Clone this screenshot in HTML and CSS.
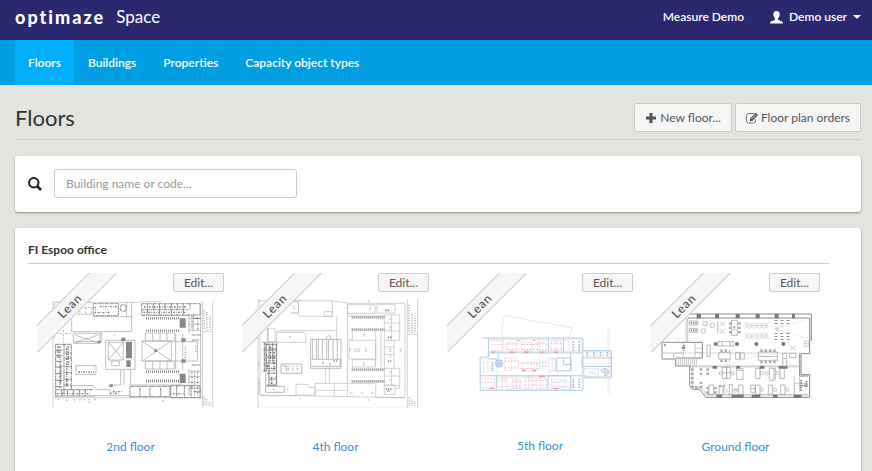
FILE: index.html
```html
<!DOCTYPE html>
<html lang="en">
<head>
<meta charset="utf-8">
<meta name="viewport" content="width=device-width, initial-scale=1">
<title>Floors - Optimaze Space</title>
<link rel="stylesheet" href="styles.css">
</head>
<body>
<header class="topbar">
  <a class="brand" href="#"><span class="brand-logo">optimaze</span><span class="brand-product">Space</span></a>
  <div class="account">
    <a href="#">Measure Demo</a>
    <button class="user-menu" type="button">
      <svg class="icon-user" viewBox="0 0 13 13" aria-hidden="true"><path d="M6.500 0C8.700 0 9.700 1.300 9.700 3.300C9.700 5 9 6.500 8 7.500V8.800L11.500 10.200C12.500 10.600 13 11.200 13 12.500H0C0 11.200.5 10.600 1.500 10.200L5 8.800V7.500C4 6.500 3.300 5 3.300 3.300C3.300 1.300 4.300 0 6.500 0Z"/></svg>
      <span>Demo user</span>
      <span class="caret"></span>
    </button>
  </div>
</header>
<nav class="tabs">
  <a class="tab tab-active" href="#">Floors</a>
  <a class="tab" href="#">Buildings</a>
  <a class="tab" href="#">Properties</a>
  <a class="tab" href="#">Capacity object types</a>
</nav>
<main class="page">
  <div class="page-head">
    <h1>Floors</h1>
    <div class="actions">
      <button class="btn" type="button"><svg class="icon" viewBox="0 0 12 12" aria-hidden="true"><path fill="#555" d="M4.500 1h3v3.500H11v3H7.500V11h-3V7.500H1v-3h3.500z"/></svg>New floor...</button>
      <button class="btn" type="button"><svg class="icon" viewBox="0 0 12 12" aria-hidden="true"><path fill="none" stroke="#777" d="M8 1.500H2.500Q.5 1.500.5 3.500V9Q.5 11 2.500 11H7.500Q9.500 11 9.500 9V7.500"/><path fill="#555" d="M4 9V6.500L9.800.8L12 3L6.300 9z"/><path stroke="#f6f6f6" stroke-width=".8" d="M5.500 7L9.500 3"/></svg>Floor plan orders</button>
    </div>
  </div>
  <form class="card search">
    <label for="search" aria-label="Search"><svg class="icon-search" viewBox="0 0 14 14" aria-hidden="true"><circle cx="5.800" cy="5.800" r="4.700" fill="none" stroke="#222" stroke-width="2"/><path d="M9 9l4 4" stroke="#222" stroke-width="2.600"/></svg></label>
    <input id="search" type="text" placeholder="Building name or code...">
  </form>
  <section class="card building">
    <h2>FI Espoo office</h2>
    <div class="floors">
      <article class="floor">
        <svg class="plan" viewBox="21 24 561 405" aria-hidden="true">
          <g fill="none" stroke="#bbb" stroke-width="2">
            <path d="M69 107V427M517 107V427M548 107V427M517 200H548M69 112H335M69 398H517M75 112H190M335 110H395"/>
          </g>
          <g fill="none" stroke="#999" stroke-width="1.800">
            <path d="M125 155V200H214V230H130M192 155H305V200H214M305 155V112M290 112V155M130 205H210V235H130zM135 210L205 233M205 210L135 233M227 226H315V313H227zM235 232H280V285H235zM235 232L280 285M280 232L235 285M245 288H268V302H245zM336 228H424V288H336zM336 228L424 288M424 228L336 288M346 204H433V228H346zM368 204V228M390 204V228M411 204V228M346 288H433V312H346zM368 288V312M390 288V312M411 288V312M437 205V312M433 230H502V288H433M458 205V312M272 313V360H245M282 313V360M302 313V360H460M125 362H190L200 374H240V392M190 392H300M138 302H198V328H138z"/>
            <path d="M512 115V400M477 145V205M477 312V392M512 160H477M512 178H477M512 196H477M512 318H477M512 335H477M512 352H477M512 370H477M335 152H475M490 145V200M494 318V395"/>
          </g>
          <g fill="none" stroke="#777" stroke-width="2.600">
            <path d="M190 116H265V152H190zM272 120H288V138H272zM335 116H510V150H335zM335 134H475M352 116V150M370 116V134M388 116V150M405 116V134M424 116V150M442 116V134M460 116V150M480 116V134" stroke-dasharray="9 2 4 2"/>
            <path d="M77 238V396M102 236V390M124 240V372M77 238H124M78 256H98M78 272H98M78 289H98M78 306H98M78 326H98M78 346H98M78 365H98M105 264H123M105 280H123M105 305H123M105 323H123M105 343H123M105 360H123M77 374H190M77 393H195M95 374V393M112 374V393M130 374V393M148 374V393M166 374V393M300 364H420V395H300zM330 368V394M360 368V394M392 368V394M422 362H510V398H422zM440 362V398M463 362V398M483 362V398M490 160H512M485 210H512M485 225H508M485 300H510M490 380H512" stroke-dasharray="12 2 5 1"/>
            <path d="M130 128H185V148H130M150 128V148M168 128V148M73 115V220M100 195V232M76 205H98M105 206H122" stroke="#aaa" stroke-dasharray="7 4"/>
          </g>
          <g fill="none" stroke="#888" stroke-width="7" stroke-dasharray="3 3"><path d="M348 160H450M348 197H450M348 320H448M348 348H448"/></g>
          <g fill="none" stroke="#777" stroke-width="4" stroke-dasharray="5 4 2 4"><path d="M84 244V280M92 300V360M115 244V300M111 345V365M80 386H180M145 321H193M240 385H260M249 380H278M428 386H460M196 125V148M203 143H240M210 125H262M342 126H470M486 152V194M503 158V196M486 320V370M503 320V392M340 142H470M90 244V372M110 250V360"/></g>
          <g fill="#888"><path d="M288 230H306V280H288zM289 286H302V306H289zM274 218H286V229H274zM449 160H467V188H449zM449 326H467V354H449zM454 220H467V230H454zM454 283H467V293H454zM238 358H248V366H238zM203 227H212V234H203zM373 253H381V261H373z"/></g>
          <g fill="none" stroke="#aaa" stroke-width="5" stroke-dasharray="2 3"><path d="M522 135V195M530 142V197M540 152V197M522 394V423M529 402V423M539 410V423M85 402V407M110 400V409M133 402V409M150 402V411M163 402V412M178 402V414M191 403H199M395 408H403M251 210H257M466 242V280M498 244V264"/></g>
        </svg>
        <div class="ribbon"><span>Lean</span></div>
        <button class="btn btn-small" type="button">Edit...</button>
        <a class="floor-name" href="#">2nd floor</a>
      </article>
      <article class="floor">
        <svg class="plan" viewBox="21 24 561 405" aria-hidden="true">
          <g fill="none" stroke="#bbb" stroke-width="2">
            <path d="M69 102V430M65 430H548V102M517 102V430M517 208H548M69 107H290L337 114M75 107V392H183M75 390L510 398V115H337M292 108V154H195L188 145M305 154V226M125 197H305M337 114V396M337 153H450M240 355H422M240 376H337M240 355V392M272 310V355M283 310V355M298 355V394M183 358H218L224 368H240V390H183zM422 360V398M510 398H422M268 140H292V154H268z"/>
            <path d="M97 190H120V230H97zM125 202H205L213 208V232H125zM352 196V226H422V282H352V310M345 222H352M352 226H342V282H352M352 284H420V306H352M422 196V306M438 196V306M358 252H374V260H358zM338 119H420V146H338zM426 118H480V144H426zM448 150H494V226H448zM448 174H494M448 198H494M470 150V226M448 310H494V362H448zM448 333H494M470 310V362M477 226V310M448 226V310M448 246H477M448 268H477M448 360H480V388H448zM494 362V370H480"/>
          </g>
          <g fill="none" stroke="#999" stroke-width="2"><path d="M227 223H318V310H227zM233 223V282M244 223V282M250 223V282M262 223V282M275 223V282M281 223V282M294 223V282M307 223V282M229 283H316V304H229M274 223C274 209 288 209 288 223M167 110H190V144H167M138 297H200V325H138zM142 303H154V320M92 364H148V382H92zM80 232H125V362H92V232M83 255H125M83 318H120M99 190V230"/></g>
          <g fill="none" stroke="#777" stroke-width="3" stroke-dasharray="9 2 4 1"><path d="M94 235V318M102 235V360M113 235V290M124 236V362M93 238H124M102 252H124M94 276H124M94 294H124M96 310H124M96 325H124M102 342H124M97 360H124M88 232V320"/></g>
          <g fill="none" stroke="#888" stroke-width="8" stroke-dasharray="3 3"><path d="M350 157H448M350 194H448M350 314H448M350 349H448"/></g>
          <g fill="none" stroke="#777" stroke-width="5" stroke-dasharray="6 4 3 3"><path d="M106 244V292M117 260V315M110 335V358M98 300V312"/></g>
          <g fill="none" stroke="#888" stroke-width="5" stroke-dasharray="4 3"><path d="M296 288H306M451 136H463M458 217H470M458 288H470M452 372H474M457 378H466M262 293H268M283 297H289"/></g>
          <g fill="none" stroke="#aaa" stroke-width="5" stroke-dasharray="2 3"><path d="M522 120V203M531 146V203M540 155V203M523 395V424M531 404V424M539 410V424M71 290V310M71 340V388M177 124V134M387 207V217M393 248V264M386 292V303M466 158V168M466 182V194M466 248V260M466 270V280M466 318V328M466 342V352M497 250V265M405 124V136M345 250V260M166 213V223M160 304V316M173 304V316M187 304V316M116 373V378M156 373H162M345 384H352M378 384H385M408 384H415M193 105H199M399 109H405M194 400H199M399 405H404"/></g>
        </svg>
        <div class="ribbon"><span>Lean</span></div>
        <button class="btn btn-small" type="button">Edit...</button>
        <a class="floor-name" href="#">4th floor</a>
      </article>
      <article class="floor">
        <svg class="plan" viewBox="21 24 561 405" aria-hidden="true">
          <g fill="none" stroke="#e1e4ef" stroke-width="2.500"><path d="M184 204L194 152L398 189L391 218M184 204L190 218M510 188V390" /><path d="M506 190V275M506 345V388" stroke-width="1.500"/></g>
          <g fill="none" stroke="#b3cce2" stroke-width="3">
            <path d="M128 220H431V378H121V278H146V220M431 258H517V340H431M121 334H170M170 334V376M146 265H431M175 265V283H148M326 334H394V376M326 334V376M327 222V264M372 222V264M352 280H395V319H352zM372 280V300H395M394 264V319M431 280H521M428 280V306H515M170 334H430"/>
          </g>
          <g fill="none" stroke="#c5d5e6" stroke-width="1.500"><path d="M147 225H428V261H147M125 283H172V373H125M190 222V264M245 222V264M300 222V264M435 261H514V336H435M435 312H478V336H435zM435 312L478 336M478 312L435 336M452 260V280M472 260V280M492 260V280M300 280V320M310 280V320M319 280V320M300 294H322M300 306H322M327 280H348V320H327M117 278V290M394 340V374M355 320V334M180 338H325M180 374H392"/></g>
          <g fill="none" stroke="#9db9d6" stroke-width="5" stroke-dasharray="5 3"><path d="M402 230V262M420 230V262M402 342V372M420 342V372M158 293V320M444 262V276M464 262V276M484 262V276M504 262V276"/></g>
          <g fill="none" stroke="#a9c2dd" stroke-width="4"><circle cx="178" cy="297" r="10"/><circle cx="178" cy="297" r="4"/><path d="M486 323A11 11 0 1 1 497 334M490 323H508M497 314V334" stroke-width="3"/></g>
          <g fill="none" stroke="#ebbfc5" stroke-width="2" stroke-dasharray="5 3">
            <path d="M151 227H188V258H151M156 240H185M204 233H230V259H204zM250 233H276V259H250zM294 233H320V259H294zM334 230H366V258H334zM350 230V258M376 230H390V258M195 282H216V318H195zM224 282H236V318M248 292H266V318H248zM275 292H293V318H275zM132 292H144V325H132zM328 284H348V320H328zM340 284V320M126 342H164V370H126M176 342H200V374M188 342V374M218 345H242V372H218zM230 336V374M256 340H280V372H256zM268 334V374M290 342H320V372H290zM304 338V372M336 345H380V370H336z"/>
          </g>
          <g fill="none" stroke="#e2adb5" stroke-width="3" stroke-dasharray="4 5"><path d="M198 238H238M198 254H238M244 240H284M244 255H284M289 238H322M290 255H322M335 237H368M335 253H368M196 290H234M196 310H234M244 296H296M244 312H296M126 354H166M176 350H202M177 366H208M222 352H246M220 366H248M256 348H322M256 362H322M338 352H384M338 366H384"/></g>
          <g fill="#e0a0aa"><path d="M233 225H239V229H233zM281 225H287V229H281zM210 261H222V265H210zM254 261H268V265H254zM301 261H312V265H301zM344 261H356V265H344zM246 316H260V320H246zM279 316H290V320H279zM299 333H315V338H299zM340 371H358V375H340zM151 370H162V374H151zM155 261H165V265H155z"/></g>
        </svg>
        <div class="ribbon"><span>Lean</span></div>
        <button class="btn btn-small" type="button">Edit...</button>
        <a class="floor-name" href="#">5th floor</a>
      </article>
      <article class="floor">
        <svg class="plan" viewBox="18 24 507 405" aria-hidden="true">
          <g fill="none" stroke="#888" stroke-width="3"><path d="M125 147H499V225H494V266H468V329H494V397H182L164 373H142L134 362V303H92V282H51V232H172V279H92M128 159H494V225M464 266V333H490"/></g>
          <g fill="none" stroke="#aaa" stroke-width="2"><path d="M123 160V230M128 160V232M134 303H464M142 303V365L168 368L186 390H490M115 233V280M150 233V280M86 264V280M54 264H114M150 250H172M150 262H172M100 282V302M106 282V302M112 282V302M118 282V302M124 282V302M130 282V302M136 282V302M142 282V302M148 282V302M154 282V302M448 332V390M448 355H488M464 332V380"/><path d="M92 264H464M134 306H464M175 388H490M464 264V305M448 360V388" stroke-dasharray="6 3"/></g>
          <g fill="none" stroke="#ddd" stroke-width="1.500"><path d="M230 305L342 270M345 270L462 304M396 190L496 160M396 194L490 222M60 236V220C75 220 78 225 80 235M95 235V221H110M134 230V220C150 222 155 225 158 232"/></g>
          <g fill="#777"><path d="M155 147H168V160H155zM210 147H222V160H210zM272 147H284V160H272zM332 147H344V160H332zM389 147H401V160H389zM441 147H450V160H441zM203 303H216V311H203zM274 303H285V311H274zM344 303H358V311H344zM401 303H427V311H401zM214 389H231V398H214zM260 389H296V398H260zM320 389H346V398H320zM384 389H398V398H384zM446 389H470V398H446z"/><circle cx="212" cy="237" r="6"/><circle cx="276" cy="237" r="6"/><circle cx="334" cy="237" r="6"/><circle cx="415" cy="237" r="6"/></g>
          <g fill="none" stroke="#999" stroke-width="2">
            <path d="M260 166H277V211H260zM219 230H266V243H219zM231 230V243M255 230V243M221 262H256V282H221zM340 261H397V286H340zM340 274H397M272 262H284V283H272zM286 264H298V282H286zM186 240H196V274H186zM413 265H425V304H413zM413 280H425M433 265H452V278H433zM133 168H158V180H133zM133 190H158V202H133zM218 170V204"/>
            <path d="M232 307H245V341H232zM245 307H256V341H245zM232 323H256M275 310H294V343H275zM275 316H294M332 310H345V341H332zM373 310H387V346H373zM387 310H391V346M405 310H418V341H405zM192 360H206V389H192zM222 363H234V389H222zM253 358H262V389H253zM281 360H294V389H281zM270 374H281M332 360H345V389H332zM370 360H382V389H370zM407 360H420V389H407zM317 360H330V382H317zM317 371H330"/>
          </g>
          <g fill="none" stroke="#999" stroke-width="1.800">
            <circle cx="180" cy="175" r="7"/><circle cx="202" cy="181" r="7"/><circle cx="175" cy="198" r="7"/><circle cx="228" cy="325" r="5"/><circle cx="262" cy="325" r="5"/><circle cx="350" cy="325" r="5"/><circle cx="365" cy="325" r="5"/><circle cx="399" cy="325" r="5"/><circle cx="241" cy="377" r="5"/><circle cx="272" cy="377" r="5"/><circle cx="350" cy="374" r="5"/><circle cx="390" cy="374" r="5"/><circle cx="426" cy="374" r="5"/><circle cx="396" cy="193" r="4"/>
          </g>
          <g fill="none" stroke="#aaa" stroke-width="8" stroke-dasharray="7 6"><path d="M256 172V210M283 172V210M226 257H254M226 287H254M346 257H394M346 291H394M142 310V370M168 310V334M188 310V334M168 350V374M150 368H160M188 366V386M211 366V386M222 363H240"/></g>
          <g fill="none" stroke="#888" stroke-width="8" stroke-dasharray="3 6"><path d="M393 165V184M411 165V184M429 165V184M393 204V232M411 204V232M429 204V232"/></g>
          <g fill="none" stroke="#bbb" stroke-width="2"><path id="seats" d="M299 173l6 5l6-5M299 191l6-6l6 6M313 173l6 5l6-5M313 191l6-6l6 6M330 173l6 5l6-5M330 191l6-6l6 6M344 173l6 5l6-5M344 191l6-6l6 6M358 173l6 5l6-5M358 191l6-6l6 6M301 182H370"/><use href="#seats" y="31"/><path d="M224 170L240 182M240 170L224 182M224 192L240 207M240 192L224 207M433 242L452 256M452 242L433 256M478 228H490V244H478zM478 236H490M459 274H466V290H459"/></g>
          <g fill="none" stroke="#777" stroke-width="5" stroke-dasharray="4 3"><path d="M110 248H124M117 240V256M137 174H155M137 196H155M468 345V378M484 348V370M464 362H488M60 238V246M268 184V194"/></g>
        </svg>
        <div class="ribbon"><span>Lean</span></div>
        <button class="btn btn-small" type="button">Edit...</button>
        <a class="floor-name" href="#">Ground floor</a>
      </article>
    </div>
  </section>
</main>
</body>
</html>
```
FILE: styles.css
```css
* {
  box-sizing: border-box;
}

body {
  margin: 0;
  background: #e3e4de;
  color: #333;
  font-family: Lato, "Noto Sans", sans-serif;
  font-size: 12px;
  line-height: 18px;
}

a {
  color: #428bca;
  text-decoration: none;
}

button,
input {
  font: inherit;
}

.topbar {
  display: flex;
  justify-content: space-between;
  align-items: center;
  height: 40px;
  padding: 0 11px 6px 15px;
  background: #2c286f;
}

.topbar a,
.user-menu {
  color: #fff;
}

.brand {
  display: flex;
  align-items: center;
  gap: 11px;
}

.brand-logo {
  font-size: 18px;
  font-weight: 900;
  letter-spacing: 2px;
}

.brand-product {
  font-size: 17px;
}

.account {
  display: flex;
  align-items: center;
  gap: 26px;
  font-weight: 600;
}

.user-menu {
  display: flex;
  align-items: center;
  gap: 6px;
  padding: 0;
  border: 0;
  background: none;
}

.icon-user {
  width: 13px;
  height: 13px;
  fill: #fff;
}

.caret {
  border: 4px solid transparent;
  border-top-color: #fff;
  border-bottom: 0;
}

.tabs {
  display: flex;
  gap: 1px;
  height: 45px;
  padding: 0 15px;
  background: #009fe3;
}

.tab {
  display: flex;
  align-items: center;
  padding: 0 13px;
  color: #fff;
  font-weight: 600;
}

.tab-active {
  background: #00b0ff;
}

.page {
  padding: 18px 11px 0 15px;
}

.page-head {
  display: flex;
  justify-content: space-between;
  margin-bottom: 16px;
  padding-bottom: 7px;
  border-bottom: 1px solid #cfd0cb;
}

h1 {
  margin: 0;
  font-size: 22px;
  font-weight: 400;
  line-height: 29px;
}

.actions {
  display: flex;
  gap: 3px;
}

.btn {
  display: flex;
  align-items: center;
  gap: 3px;
  height: 29px;
  padding: 0 10px;
  border: 1px solid #ccc;
  border-radius: 2px;
  background: #f6f6f6;
  color: #555;
}

.icon {
  width: 12px;
  height: 12px;
}

.card {
  margin-bottom: 16px;
  padding: 13px 13px 14px;
  border-radius: 3px;
  background: #fff;
  box-shadow: 0 1px 2px rgba(0, 0, 0, 0.4);
}

.search {
  display: flex;
  align-items: center;
  gap: 12px;
}

.search label {
  display: flex;
}

.icon-search {
  width: 14px;
  height: 14px;
}

.search input {
  width: 243px;
  height: 29px;
  padding: 0 11px;
  border: 1px solid #ccc;
  border-radius: 3px;
  color: #555;
}

.search input::placeholder {
  color: #999;
}

.building {
  margin-bottom: 0;
  padding-right: 32px;
  padding-bottom: 18px;
}

h2 {
  margin: 0 0 9px;
  padding-bottom: 5px;
  border-bottom: 1px solid #ccc;
  font-size: 12px;
  font-weight: 700;
  line-height: 17px;
}

.floors {
  display: grid;
  grid-template-columns: 187fr 187fr 186fr 169fr;
  gap: 18px;
  padding: 0 9px;
}

.floor {
  position: relative;
  display: flex;
  flex-direction: column;
  align-items: center;
  gap: 30px;
}

.plan {
  width: 100%;
}

.ribbon {
  position: absolute;
  top: 0;
  left: 0;
  width: 80px;
  height: 80px;
  overflow: hidden;
}

.ribbon span {
  position: absolute;
  top: 23px;
  left: -37px;
  width: 140px;
  height: 20px;
  border: 1px solid #ccc;
  background: #f6f6f6;
  color: #444;
  letter-spacing: 1px;
  text-align: center;
  transform: rotate(-45deg);
}

.btn-small {
  position: absolute;
  top: 0;
  right: 0;
  height: 19px;
}
```
